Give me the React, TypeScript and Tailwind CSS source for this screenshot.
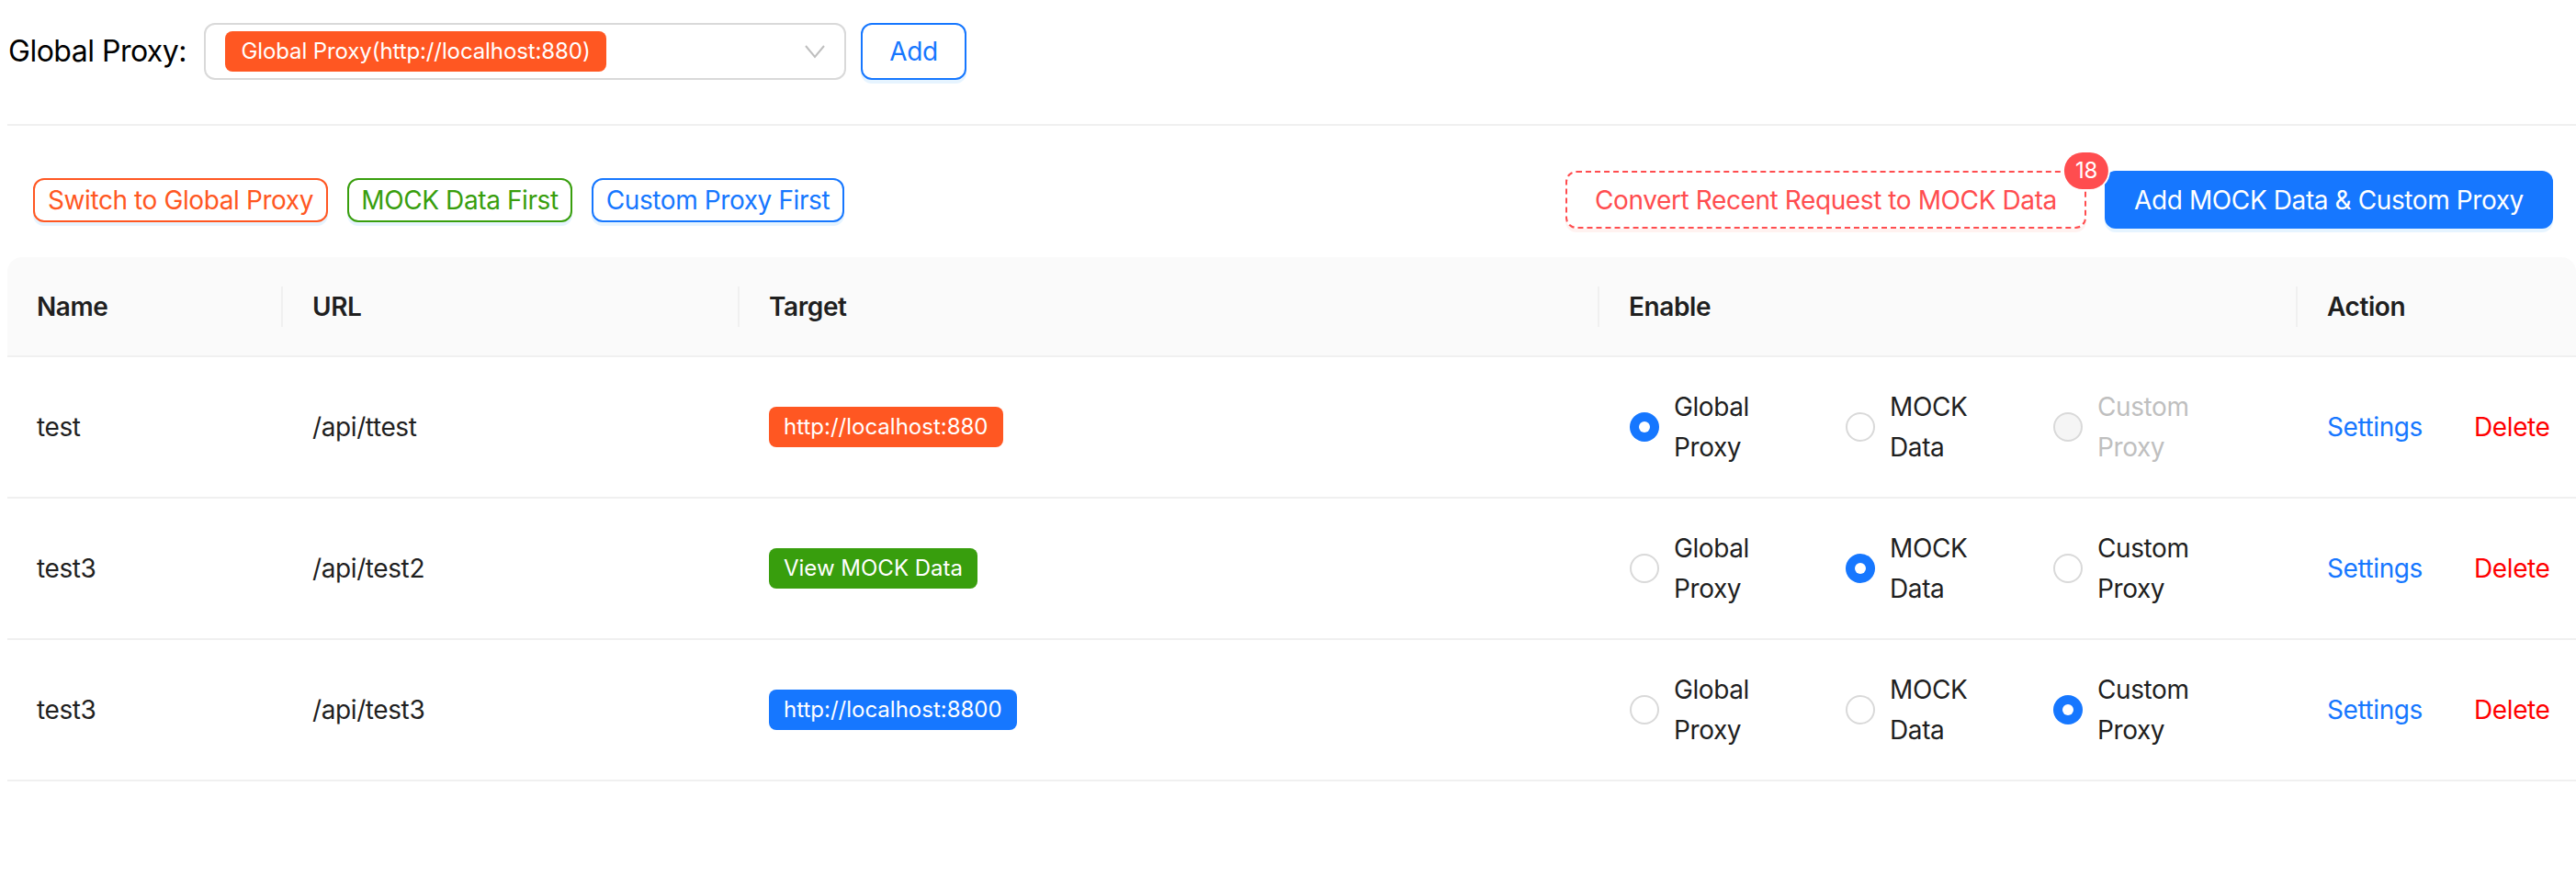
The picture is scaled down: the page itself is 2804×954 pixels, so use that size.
import React from "react";

type RadioState = "checked" | "unchecked" | "disabled";

function Radio({ state, l1, l2, w }: { state: RadioState; l1: string; l2: string; w: string }) {
  return (
    <div className={`flex items-center ${w}`}>
      {state === "checked" ? (
        <span className="flex h-[32px] w-[32px] shrink-0 items-center justify-center rounded-full bg-[#1677ff]">
          <span className="h-[12px] w-[12px] rounded-full bg-white" />
        </span>
      ) : state === "disabled" ? (
        <span className="h-[32px] w-[32px] shrink-0 rounded-full border-2 border-[#d9d9d9] bg-[#f5f5f5]" />
      ) : (
        <span className="h-[32px] w-[32px] shrink-0 rounded-full border-2 border-[#d9d9d9] bg-white" />
      )}
      <div
        className={`ml-[16px] flex flex-col leading-[44px] ${
          state === "disabled" ? "text-[#bfbfbf]" : "text-[#1f1f1f]"
        }`}
      >
        <span>{l1}</span>
        <span>{l2}</span>
      </div>
    </div>
  );
}

type Row = {
  name: string;
  url: string;
  tag: string;
  tagBg: string;
  radios: [RadioState, RadioState, RadioState];
};

const rows: Row[] = [
  {
    name: "test",
    url: "/api/ttest",
    tag: "http://localhost:880",
    tagBg: "bg-[#ff5722]",
    radios: ["checked", "unchecked", "disabled"],
  },
  {
    name: "test3",
    url: "/api/test2",
    tag: "View MOCK Data",
    tagBg: "bg-[#389e0d]",
    radios: ["unchecked", "checked", "unchecked"],
  },
  {
    name: "test3",
    url: "/api/test3",
    tag: "http://localhost:8800",
    tagBg: "bg-[#1677ff]",
    radios: ["unchecked", "unchecked", "checked"],
  },
];

function HeaderCell({ children, sep = true }: { children: React.ReactNode; sep?: boolean }) {
  return (
    <div className="relative flex items-center px-[32px] font-semibold">
      {children}
      {sep && (
        <span className="absolute right-0 top-1/2 h-[44px] w-[2px] -translate-y-1/2 bg-[#f0f0f0]" />
      )}
    </div>
  );
}

export default function App() {
  return (
    <div className="min-h-[954px] w-[2804px] bg-white pl-[8px] font-['Inter',sans-serif] text-[28px] tracking-[-0.4px] text-[#1f1f1f]">
      {/* top row */}
      <div className="flex items-center pt-[25px]">
        <div className="w-[214px] pl-[1px] text-[32px] tracking-[-0.5px] text-black">Global Proxy:</div>
        <div className="flex h-[62px] w-[699px] items-center justify-between rounded-[12px] border-2 border-[#d9d9d9] pl-[21px] pr-[20px]">
          <span className="flex h-[44px] w-[415px] items-center justify-center rounded-[8px] bg-[#ff5722] text-[24px] tracking-[-0.1px] text-white">
            Global Proxy(http://localhost:880)
          </span>
          <svg width="24" height="16" viewBox="0 0 24 16" fill="none">
            <polyline points="2,2 12,14 22,2" stroke="#bfbfbf" strokeWidth="2" />
          </svg>
        </div>
        <button className="ml-[16px] flex h-[62px] w-[115px] items-center justify-center rounded-[12px] border-2 border-[#1677ff] bg-white text-[#1677ff] shadow-[0_4px_0_rgba(5,145,255,0.1)]">
          Add
        </button>
      </div>

      {/* divider */}
      <div className="mt-[48px] h-[2px] bg-[#f0f0f0]" />

      {/* actions row */}
      <div className="mt-[49px] flex items-center justify-between pr-[25px]">
        <div className="ml-[28px] flex items-center gap-[21px]">
          <button className="flex h-[48px] w-[321px] items-center justify-center rounded-[12px] border-2 border-[#ff5722] bg-white text-[#ff5722] shadow-[0_4px_0_rgba(5,145,255,0.1)]">
            Switch to Global Proxy
          </button>
          <button className="flex h-[48px] w-[245px] items-center justify-center rounded-[12px] border-2 border-[#389e0d] bg-white text-[#389e0d] shadow-[0_4px_0_rgba(5,145,255,0.1)]">
            MOCK Data First
          </button>
          <button className="flex h-[48px] w-[275px] items-center justify-center rounded-[12px] border-2 border-[#1677ff] bg-white text-[#1677ff] shadow-[0_4px_0_rgba(5,145,255,0.1)]">
            Custom Proxy First
          </button>
        </div>
        <div className="flex items-center gap-[20px]">
          <div className="relative">
            <button className="flex h-[63px] w-[567px] items-center justify-center rounded-[12px] border-2 border-dashed border-[#ff4d4f] bg-white text-[#ff4d4f] shadow-[0_4px_0_rgba(255,38,5,0.06)]">
              Convert Recent Request to MOCK Data
            </button>
            <span className="absolute right-0 top-0 flex h-[40px] min-w-[40px] translate-x-1/2 -translate-y-1/2 items-center justify-center rounded-full bg-[#ff4d4f] px-[12px] text-[24px] text-white shadow-[0_0_0_2px_#fff]">
              18
            </span>
          </div>
          <button className="flex h-[63px] w-[488px] items-center justify-center rounded-[12px] bg-[#1677ff] text-white shadow-[0_4px_0_rgba(5,145,255,0.1)]">
            Add MOCK Data &amp; Custom Proxy
          </button>
        </div>
      </div>

      {/* table */}
      <div className="mt-[31px]">
        <div className="grid h-[109px] grid-cols-[300px_497px_936px_760px_303px] rounded-t-[16px] border-b-2 border-[#f0f0f0] bg-[#fafafa] text-[#1f1f1f]">
          <HeaderCell>Name</HeaderCell>
          <HeaderCell>URL</HeaderCell>
          <HeaderCell>Target</HeaderCell>
          <HeaderCell>Enable</HeaderCell>
          <HeaderCell sep={false}>Action</HeaderCell>
        </div>
        {rows.map((r, i) => (
          <div
            key={i}
            className="grid h-[154px] grid-cols-[300px_497px_936px_760px_303px] border-b-2 border-[#f0f0f0]"
          >
            <div className="flex items-center px-[32px]">{r.name}</div>
            <div className="flex items-center px-[32px]">{r.url}</div>
            <div className="flex items-center px-[32px]">
              <span
                className={`flex h-[44px] items-center rounded-[8px] px-[16px] text-[24px] tracking-normal text-white ${r.tagBg}`}
              >
                {r.tag}
              </span>
            </div>
            <div className="flex items-center pl-[33px]">
              <Radio state={r.radios[0]} l1="Global" l2="Proxy" w="w-[235px]" />
              <Radio state={r.radios[1]} l1="MOCK" l2="Data" w="w-[226px]" />
              <Radio state={r.radios[2]} l1="Custom" l2="Proxy" w="w-[200px]" />
            </div>
            <div className="flex items-center gap-[56px] px-[32px]">
              <span className="text-[#1677ff]">Settings</span>
              <span className="text-[#ff0000]">Delete</span>
            </div>
          </div>
        ))}
      </div>
    </div>
  );
}
